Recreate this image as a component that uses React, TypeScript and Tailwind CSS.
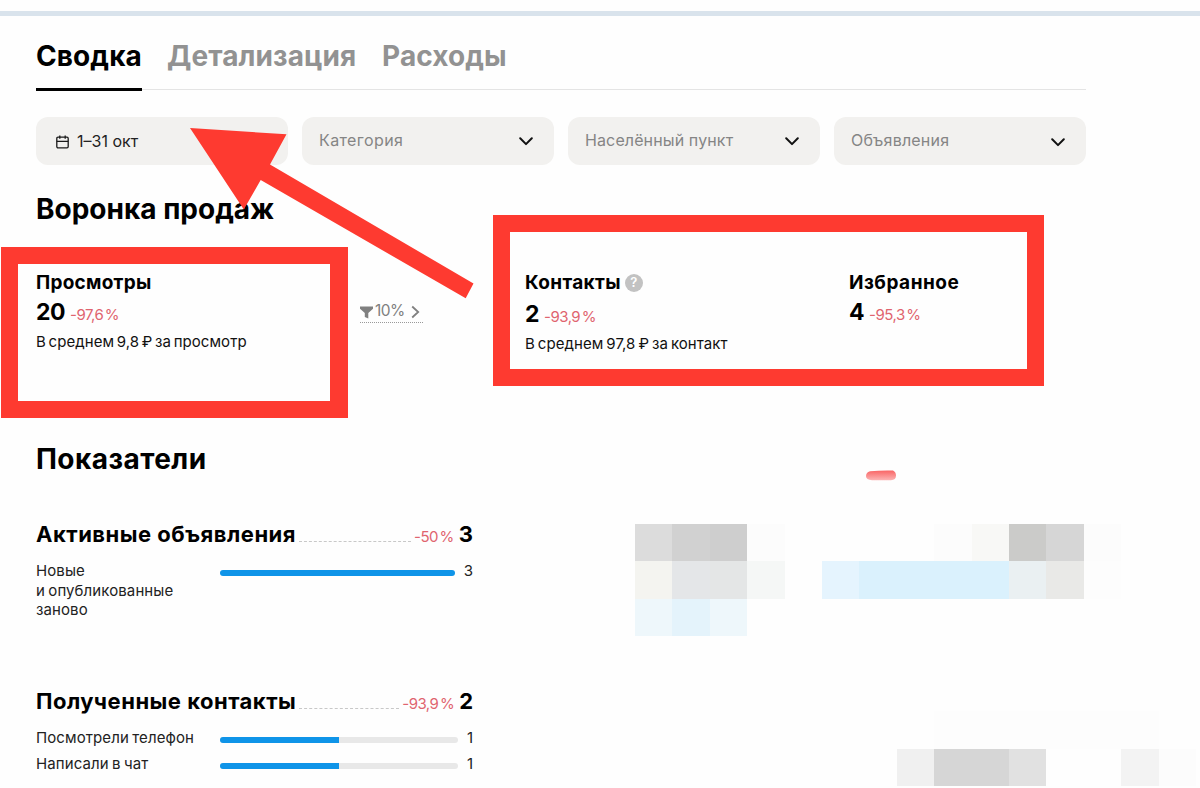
import React from 'react';

interface MetricBarProps {
  label: React.ReactNode;
  value: number;
  total: number;
  className?: string;
  barClassName?: string;
}

interface MetricHeadingProps {
  title: string;
  change: string;
  value: number;
  className?: string;
}

const Chevron: React.FC<{ className?: string }> = ({ className = '' }) => (
  <svg width="14" height="9" viewBox="0 0 14 9" fill="none" className={className}>
    <path d="M1.2 1.3 7 7.1l5.8-5.8" stroke="#111" strokeWidth="2" strokeLinecap="round" strokeLinejoin="round" />
  </svg>
);

const CalendarIcon: React.FC = () => (
  <svg width="13" height="14" viewBox="0 0 13 14" fill="none" stroke="#1a1a1a" strokeWidth="1.3" className="mt-0.5">
    <rect x="0.8" y="2.2" width="11.4" height="10.6" rx="1.2" />
    <path d="M.8 6.3h11.4M3.8.4v3.4M9.2.4v3.4" />
  </svg>
);

const FunnelIcon: React.FC = () => (
  <svg width="13" height="13" viewBox="0 0 13 13" fill="#808080" className="mt-0.5">
    <path d="M0 .5h13v2.2L8.3 7v5.6L4.8 11V7L0 2.7z" />
  </svg>
);

const Change: React.FC<{ children: string }> = ({ children }) => (
  <span className="text-[15px] tracking-[-0.5px] [word-spacing:-2.2px] text-[#e0646f]">{children}</span>
);

const MetricHeading: React.FC<MetricHeadingProps> = ({ title, change, value, className = '' }) => (
  <div className={`flex h-7 items-baseline whitespace-nowrap leading-7 ${className}`}>
    <h3 className="text-[22px] font-bold tracking-[0.5px]">{title}</h3>
    <div className="ml-[3px] mr-[3px] flex-1 border-b border-dashed border-[#c8c8c8]" />
    <Change>{change}</Change>
    <span className="ml-[5px] text-[22px] font-bold">{value}</span>
  </div>
);

const MetricBar: React.FC<MetricBarProps> = ({ label, value, total, className = '', barClassName = 'w-[238px]' }) => (
  <div className={`flex text-[15px] leading-[19.5px] text-[#222] ${className}`}>
    <div className="w-[184px] shrink-0 whitespace-nowrap tracking-[0.1px] [word-spacing:-1px]">{label}</div>
    <div className={`mt-[9px] h-1.5 overflow-hidden rounded-full bg-[#e8e8e8] ${barClassName}`}>
      <div className="h-full bg-[#0f94e8]" style={{ width: `${(value / total) * 100}%` }} />
    </div>
    <div className="flex-1 text-right">{value}</div>
  </div>
);

const filters = [
  { name: 'Категория', text: 'tracking-[0.4px]', icon: '' },
  { name: 'Населённый пункт', text: 'tracking-[0.12px]', icon: '' },
  { name: 'Объявления', text: 'tracking-[0.2px]', icon: 'mt-0.5' },
];

// Censored blocks, one colour per cell
const mosaic = [
  ['#dcdcdc', '#d1d1d1', '#cecece', '#fcfcfc', '', '', '', '', '#fcfcfc', '#f8f8f6', '#cbcbc9', '#d6d6d6', '#fcfcfc', '', ''],
  ['#f4f4f0', '#e4e6e8', '#e4e6e6', '#f5f7f6', '', '#e5f4fe', '#daf1fd', '#daf1fd', '#daf1fd', '#daf1fd', '#eaf0f2', '#e9e9e7', '#fdfdfd', '', ''],
  ['#eef7fb', '#e4f3fb', '#eef7fb', '', '', '', '', '', '', '', '', '', '', '', ''],
  ['', '', '', '', '', '', '', '', '', '', '', '', '', '', ''],
  ['', '', '', '', '', '', '', '', '', '', '', '', '', '', ''],
  ['', '', '', '', '', '', '', '', '#fdfdfd', '#fdfdfd', '#fdfdfd', '#fdfdfd', '#fdfdfd', '#fdfdfd', ''],
  ['', '', '', '', '', '', '', '#f0f0f0', '#d6d6d6', '#d6d6d6', '#e1e1e1', '', '', '#f3f3f3', '#fcfcfc'],
];

const App: React.FC = () => {
  return (
    <div className="relative h-[788px] w-[1200px] overflow-hidden bg-[#fefefe] font-['Inter','Liberation_Sans',sans-serif] text-black">
      <div className="pt-[11px]">
        <div className="h-[5px] bg-[#d9e3ec]" />
      </div>

      {/* Tabs */}
      <nav className="ml-9 flex h-[74px] w-[1050px] gap-[25px] border-b border-[#e4e4e4] text-[28px] font-bold tracking-[0.1px] text-[#929292]">
        <div className="h-[75px] w-[106px] shrink-0 whitespace-nowrap border-b-[3px] border-black pt-5 leading-10 text-black">Сводка</div>
        <div className="w-[190px] shrink-0 whitespace-nowrap pt-5 leading-10">Детализация</div>
        <div className="whitespace-nowrap pt-5 leading-10">Расходы</div>
      </nav>

      {/* Filters */}
      <div className="ml-9 mt-[27px] grid h-12 w-[1050px] grid-cols-4 gap-[14px] text-[16px] text-[#858585]">
        <div className="flex items-center gap-2 rounded-xl bg-[#f2f1ef] pl-5 text-[#222]">
          <CalendarIcon />
          <span>1–31 окт</span>
        </div>
        {filters.map(({ name, text, icon }) => (
          <div key={name} className="flex items-center justify-between rounded-xl bg-[#f2f1ef] pl-[17px] pr-[21px]">
            <span className={`pb-0.5 ${text}`}>{name}</span>
            <Chevron className={icon} />
          </div>
        ))}
      </div>

      {/* Sales funnel */}
      <section className="pl-9">
        <h2 className="mt-6 text-[28px] font-bold leading-10">Воронка продаж</h2>
        <div className="mt-10 flex h-[89px] whitespace-nowrap">
          <div className="w-[324px]">
            <h3 className="text-[19px] font-bold leading-7 tracking-[0.25px]">Просмотры</h3>
            <div className="-mt-px flex items-baseline gap-[5px] leading-8">
              <span className="text-[23px] font-bold tracking-[-0.5px]">20</span>
              <Change>-97,6 %</Change>
            </div>
            <p className="-mt-0.5 text-[15px] leading-[26px] tracking-[0.06px] text-[#111] [word-spacing:-1.6px]">В среднем 9,8 ₽ за просмотр</p>
          </div>
          <div className="w-[165px] pt-[31px]">
            <div className="flex h-[23px] w-[63px] items-center border-b border-dotted border-[#999] text-[15.5px] text-[#808080]">
              <FunnelIcon />
              <span className="ml-0.5 tracking-[-0.5px]">10%</span>
              <svg width="9" height="14" viewBox="0 0 9 14" fill="none" className="ml-1.5 mt-0.5">
                <path d="m1.2 1.5 6 5.5-6 5.5" stroke="#808080" strokeWidth="1.8" />
              </svg>
            </div>
          </div>
          <div className="w-[324px]">
            <div className="flex items-center gap-1">
              <h3 className="text-[19px] font-bold leading-7 tracking-[0.35px]">Контакты</h3>
              <span className="flex h-[18px] w-[18px] items-center justify-center rounded-full bg-[#c2c2c2] text-[13px] font-semibold text-white">?</span>
            </div>
            <div className="mt-px flex items-baseline gap-[5px] leading-8">
              <span className="text-[23px] font-bold tracking-[-0.5px]">2</span>
              <Change>-93,9 %</Change>
            </div>
            <p className="-mt-0.5 text-[15px] leading-[26px] tracking-[0.06px] text-[#111] [word-spacing:-1.3px]">В среднем 97,8 ₽ за контакт</p>
          </div>
          <div>
            <h3 className="text-[19px] font-bold leading-7 tracking-[0.5px]">Избранное</h3>
            <div className="-mt-px flex items-baseline gap-[5px] leading-8">
              <span className="text-[23px] font-bold tracking-[-0.5px]">4</span>
              <Change>-95,3 %</Change>
            </div>
          </div>
        </div>
      </section>

      {/* Indicators */}
      <section className="pl-9 pt-[81px]">
        <h2 className="text-[28px] font-bold leading-10 tracking-[0.45px]">Показатели</h2>
        <div className="flex">
          <div className="w-[437px] pt-[41px]">
            <MetricHeading title="Активные объявления" change="-50 %" value={3} />
            <MetricBar
              className="mt-[13px]"
              barClassName="w-[235px]"
              value={3}
              total={3}
              label={<>Новые<br />и опубликованные<br />заново</>}
            />
            <MetricHeading className="mt-[67px]" title="Полученные контакты" change="-93,9 %" value={2} />
            <MetricBar className="mt-[13px]" label="Посмотрели телефон" value={1} total={2} />
            <MetricBar className="mt-[7px]" label="Написали в чат" value={1} total={2} />
          </div>
          <div className="ml-[162px] mt-[45px] grid h-[262px] w-[561px] grid-cols-[repeat(15,1fr)] grid-rows-7">
            {mosaic.flat().map((color, i) => (
              <div key={i} style={{ backgroundColor: color }} />
            ))}
          </div>
        </div>
      </section>

      {/* Marker annotations drawn over the report */}
      <svg className="absolute left-[865px] top-[469px]" width="32" height="13" viewBox="0 0 32 13">
        <defs>
          <linearGradient id="marker" x1="0" y1="0" x2="0" y2="1">
            <stop offset="0" stopColor="#f96464" />
            <stop offset="1" stopColor="#fcb4b4" />
          </linearGradient>
        </defs>
        <path d="M5 2.2Q16 1.200 28 1.500Q31 3 31 6.500Q31 11 26 11.200H7Q1 11 1 7Q1 3.500 5 2.200z" fill="url(#marker)" />
      </svg>
      <div className="absolute left-px top-[247px] h-[171px] w-[347px] border-[17px] border-r-[18px] border-[#fe3a30]" />
      <div className="absolute left-[493px] top-[215px] h-[171px] w-[551px] border-[17px] border-[#fe3a30]" />
      <svg className="absolute left-0 top-0" width="500" height="310" viewBox="0 0 500 310">
        <path d="M190 128 286.5 134.3 270 164.5 473.5 283.5 465.7 298.3 260.7 180 243.8 209.5z" fill="#fe3a30" />
      </svg>
    </div>
  );
};

export default App;
